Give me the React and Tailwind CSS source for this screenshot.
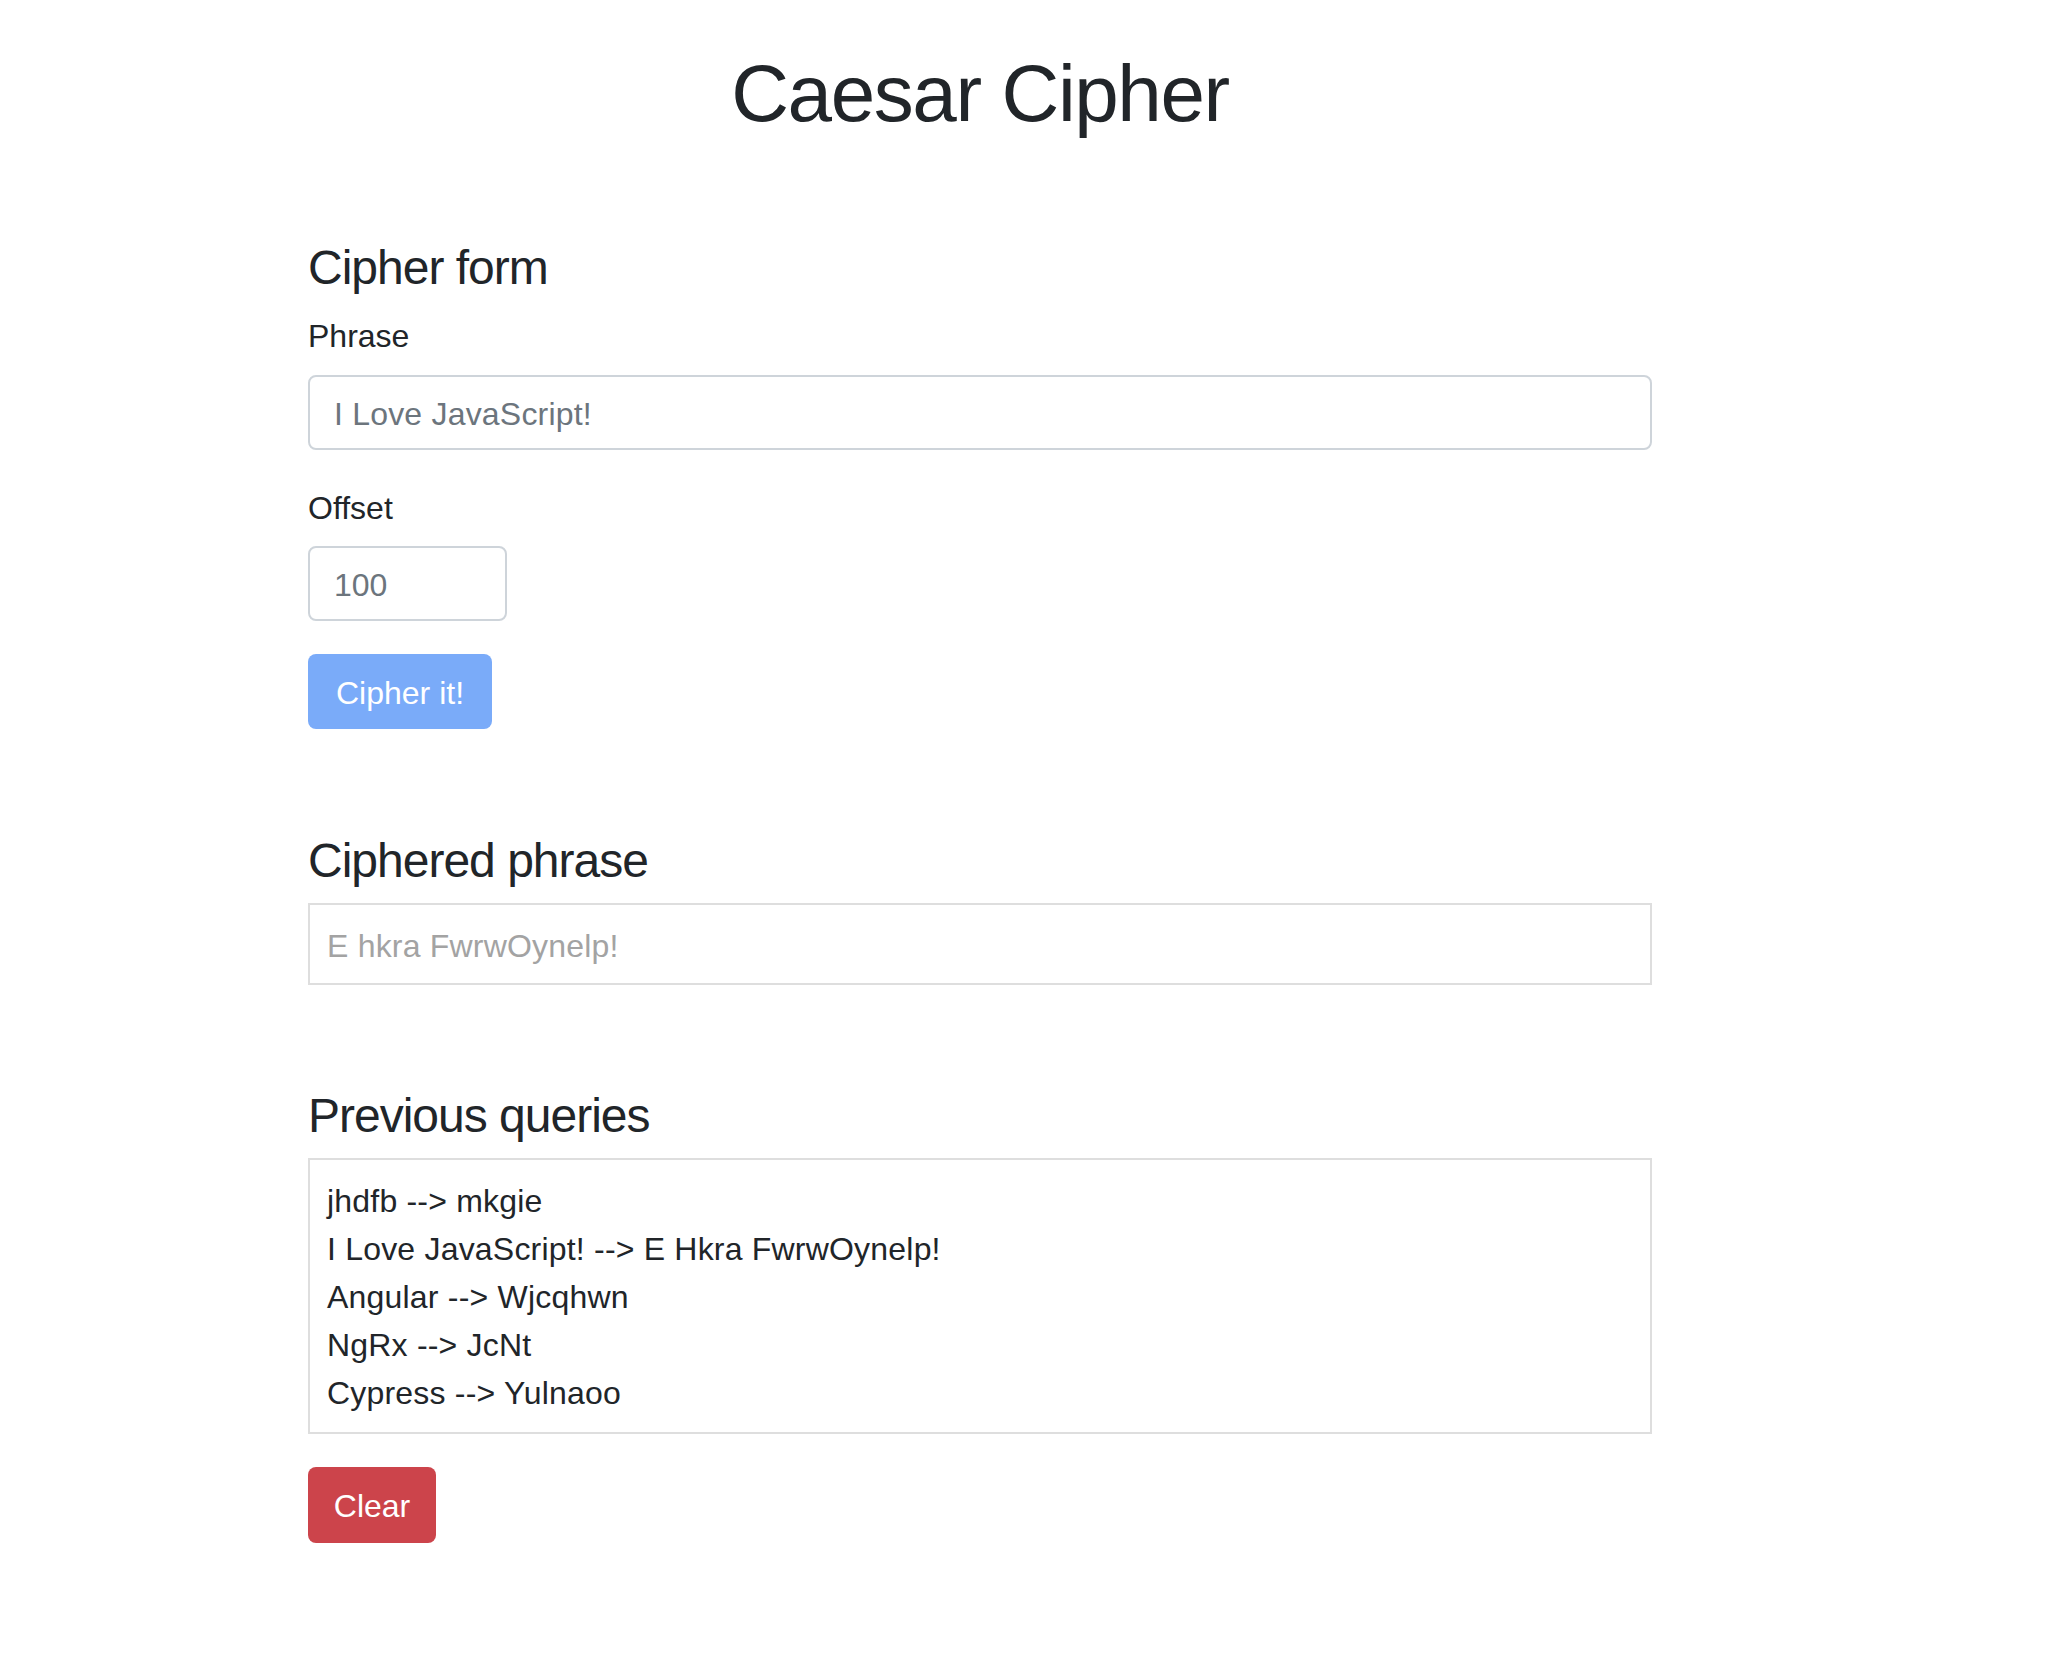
import { useState } from "react";

const history = [
    "jhdfb --> mkgie",
    "I Love JavaScript! --> E Hkra FwrwOynelp!",
    "Angular --> Wjcqhwn",
    "NgRx --> JcNt",
    "Cypress --> Yulnaoo",
];

const App = () => {
    const [phrase] = useState("I Love JavaScript!");
    const [offset] = useState("100");
    const [queries, setQueries] = useState(history);

    return (
        <div className="min-h-screen bg-white text-[#212529] font-['Liberation_Sans',Arial,sans-serif]">
            <div className="ml-[308px] w-[1344px] pt-[46px] pb-[120px]">
                <h1 className="text-center text-[80px] leading-[96px] tracking-[-1.4px]">Caesar Cipher</h1>

                {/* Form */}
                <h4 className="mt-[97px] text-[48px] leading-[58px] tracking-[-1px]">Cipher form</h4>
                <label className="block mt-[16px] text-[32px] leading-[46px]">Phrase</label>
                <input
                    type="text"
                    readOnly
                    value={phrase}
                    className="mt-[16px] block w-full h-[75px] px-[24px] pt-[3px] border-2 border-[#ced4da] rounded-[8px] text-[32px] tracking-[0.2px] text-[#6c757d] outline-none"
                />
                <label className="block mt-[35px] text-[32px] leading-[46px]">Offset</label>
                <input
                    type="text"
                    readOnly
                    value={offset}
                    className="mt-[15px] block w-[199px] h-[75px] px-[24px] pt-[3px] border-2 border-[#ced4da] rounded-[8px] text-[32px] text-[#6c757d] outline-none"
                />
                <button className="mt-[33px] flex items-center justify-center w-[184px] h-[75px] rounded-[8px] bg-[#7aabf9] text-white text-[32px] pt-[2px]">
                    Cipher it!
                </button>

                {/* Result */}
                <h4 className="mt-[103px] text-[48px] leading-[58px] tracking-[-1px]">Ciphered phrase</h4>
                <div className="mt-[13px] flex items-center h-[82px] px-[17px] pt-[3px] border-2 border-[#dedede] text-[32px] tracking-[0.2px] text-[#a3a3a3]">
                    E hkra FwrwOynelp!
                </div>

                {/* History */}
                <h4 className="mt-[102px] text-[48px] leading-[58px] tracking-[-1px]">Previous queries</h4>
                <div className="mt-[13px] border-2 border-[#dedede] px-[17px] pt-[17px] pb-[15px] text-[32px] leading-[48px] tracking-[0.2px]">
                    {queries.map((q, i) => (
                        <div key={i}>{q}</div>
                    ))}
                </div>
                <button
                    onClick={() => setQueries(queries)}
                    className="mt-[33px] flex items-center justify-center w-[128px] h-[76px] rounded-[8px] bg-[#cc444b] text-white text-[32px] pt-[2px]"
                >
                    Clear
                </button>
            </div>
        </div>
    );
};

export default App;
